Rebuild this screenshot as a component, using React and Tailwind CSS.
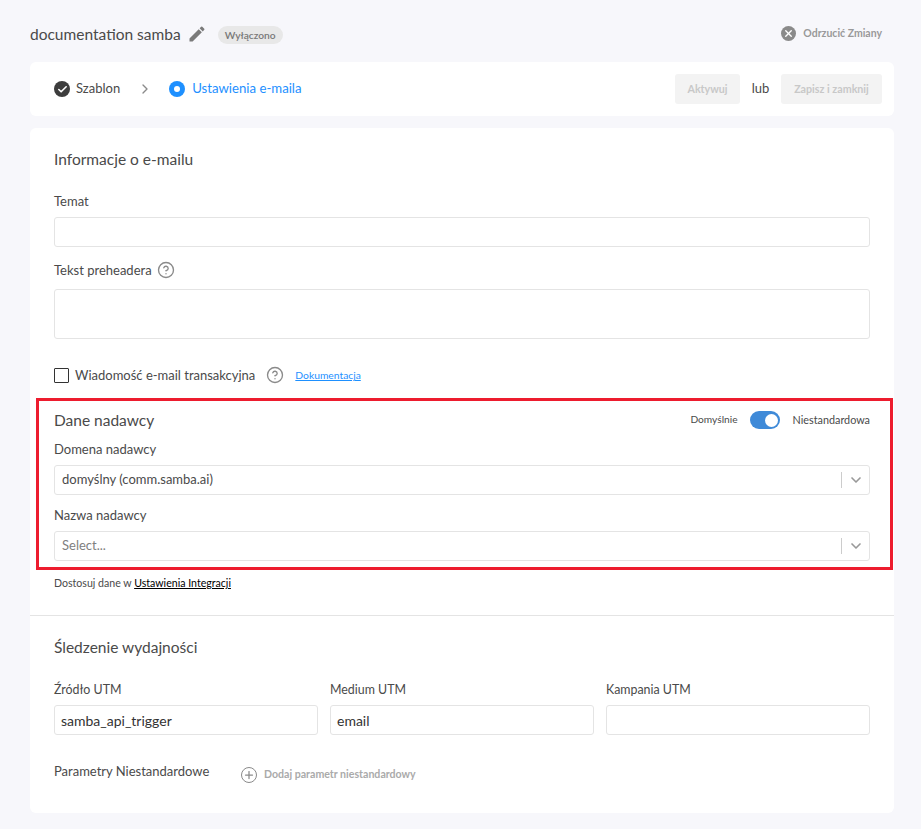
import { Check, ChevronDown, ChevronRight, CircleHelp, Plus, X } from 'lucide-react'

const FONT = "font-['Lato','Noto_Sans',sans-serif]"

const Label = ({ children, className = '' }) => (
  <div className={`text-[13px] leading-[18px] text-[#4a4a4a] ${className}`}>{children}</div>
)

const Heading = ({ children }) => (
  <div className="text-[15.5px] leading-[20px] text-[#4a4a4a]">{children}</div>
)

const TextInput = ({ value, className = '' }) => (
  <div className={`h-[30px] px-[6px] flex items-center bg-white border border-[#e4e4e4] rounded-[3px] text-[14px] text-[#333] ${className}`}>
    {value}
  </div>
)

const Select = ({ value, placeholder }) => (
  <div className="h-[30px] flex items-center bg-white border border-[#e4e4e4] rounded-[3px] text-[13px]">
    <div className={`flex-1 pl-[7px] ${placeholder ? 'text-[#808080]' : 'text-[#4a4a4a]'}`}>{value || placeholder}</div>
    <div className="w-px h-4 bg-[#cccccc]" />
    <div className="w-[27px] flex justify-center text-[#999]"><ChevronDown size={16} strokeWidth={2.5} /></div>
  </div>
)

const Help = ({ className = '' }) => <CircleHelp size={18} strokeWidth={1.8} className={`text-[#8a8a8a] ${className}`} />

export default function App() {
  return (
    <div className={`min-h-[829px] bg-[#f7f7fb] px-[30px] pb-4 pt-[15px] w-[921px] pr-[27px] ${FONT}`}>
      {/* naglowek */}
      <div className="h-[47px] flex items-start pt-[3px]">
        <div className="text-[15.5px] leading-[32px] text-[#4a4a4a]">documentation samba</div>
        <svg viewBox="0 0 24 24" className="ml-[6px] mt-[6px] w-5 h-5 fill-[#7a7a7a]">
          <path d="M3 17.25V21h3.75L17.81 9.94l-3.75-3.75L3 17.25zM20.71 7.04a1 1 0 000-1.41l-2.34-2.34a1 1 0 00-1.41 0l-1.83 1.83 3.75 3.75 1.83-1.83z" />
        </svg>
        <div className="ml-[11px] mt-[8px] h-[18px] w-[65px] text-center rounded-full bg-[#e8e8e8] text-[10.2px] leading-[18px] font-semibold text-[#777]">Wyłączono</div>
        <div className="ml-auto mr-[12px] mt-[8px] flex items-center gap-[7px]">
          <div className="w-[15px] h-[15px] rounded-full bg-[#8a8a8a] flex items-center justify-center text-white"><X size={11} strokeWidth={3} /></div>
          <span className="text-[10.5px] font-bold text-[#999]">Odrzucić Zmiany</span>
        </div>
      </div>

      {/* kroki */}
      <div className="h-[54px] bg-white rounded-[6px] flex items-center pl-[24px] pr-[12px]">
        <div className="w-4 h-4 rounded-full bg-[#3d3d3d] flex items-center justify-center text-white"><Check size={11} strokeWidth={3.5} /></div>
        <span className="ml-[6px] text-[13px] -mt-px text-[#4a4a4a]">Szablon</span>
        <ChevronRight size={16} strokeWidth={2} className="ml-[17px] text-[#8a8a8a]" />
        <div className="ml-[16px] w-4 h-4 rounded-full bg-[#1e90ff] flex items-center justify-center"><div className="w-[6px] h-[6px] rounded-full bg-white" /></div>
        <span className="ml-[7px] text-[13.2px] -mt-px text-[#1e90ff]">Ustawienia e-maila</span>
        <div className="ml-auto flex items-center">
          <div className="h-[30px] w-[65px] rounded-[3px] bg-[#f3f3f3] text-[10.7px] font-bold text-[#c8c8c8] flex items-center justify-center">Aktywuj</div>
          <span className="w-[41px] text-center text-[13px] -mt-px text-[#4a4a4a]">lub</span>
          <div className="h-[30px] w-[101px] rounded-[3px] bg-[#f3f3f3] text-[10.7px] font-bold text-[#c8c8c8] flex items-center justify-center">Zapisz i zamknij</div>
        </div>
      </div>

      {/* formularz */}
      <div className="mt-[12px] bg-white rounded-[6px] h-[685px]">
        <div className="px-[24px] pt-[21px]">
          <Heading>Informacje o e-mailu</Heading>
          <Label className="mt-[23px]">Temat</Label>
          <TextInput className="mt-[7px]" />
          <div className="mt-[14px] flex items-center gap-[5px]">
            <Label>Tekst preheadera</Label>
            <Help />
          </div>
          <div className="mt-[10px] h-[50px] bg-white border border-[#e4e4e4] rounded-[3px]" />
          <div className="mt-[27px] flex items-center h-[18px]">
            <div className="w-[15px] h-[15px] border border-[#333] rounded-[1px]" />
            <Label className="ml-[6px]">Wiadomość e-mail transakcyjna</Label>
            <Help className="ml-[11px]" />
            <a className="ml-[11px] mt-[2px] text-[10.3px] text-[#1e90ff] underline">Dokumentacja</a>
          </div>

          <div className="mt-[14px] -ml-[18px] -mr-[23px] border-[3px] border-[#ed1c2e] pl-[15px] pr-[20px] pt-[9px] h-[172px]">
            <div className="flex items-center h-[20px]">
              <Heading>Dane nadawcy</Heading>
              <div className="ml-auto flex items-center text-[#4a4a4a]">
                <span className="text-[10.2px]">Domyślnie</span>
                <div className="ml-[12px] mr-[13px] w-[30px] h-[18px] rounded-full bg-[#3f8ad8] flex justify-end items-center pr-[2px]"><div className="w-[13px] h-[13px] rounded-full bg-white" /></div>
                <span className="text-[10.8px]">Niestandardowa</span>
              </div>
            </div>
            <Label className="mt-[10px]">Domena nadawcy</Label>
            <div className="mt-[7px]"><Select value="domyślny (comm.samba.ai)" /></div>
            <Label className="mt-[11px]">Nazwa nadawcy</Label>
            <div className="mt-[7px]"><Select placeholder="Select..." /></div>
          </div>

          <div className="mt-[6px] text-[10.6px] leading-[14px] text-[#4a4a4a]">
            Dostosuj dane w <a className="text-black underline">Ustawienia Integracji</a>
          </div>
        </div>

        <div className="mt-[25px] border-t border-[#e4e4e4] px-[24px] pt-[21px]">
          <Heading>Śledzenie wydajności</Heading>
          <div className="mt-[24px] grid grid-cols-3 gap-x-[12px]">
            {[['Źródło UTM', 'samba_api_trigger'], ['Medium UTM', 'email'], ['Kampania UTM', '']].map(([l, v]) => (
              <div key={l}>
                <div className="text-[12.4px] leading-[18px] text-[#4a4a4a]">{l}</div>
                <TextInput className="mt-[6px]" value={v} />
              </div>
            ))}
          </div>
          <div className="mt-[32px] flex items-center">
            <Label className="w-[187px] -mt-[8px]">Parametry Niestandardowe</Label>
            <div className="w-4 h-4 rounded-full border-[1.5px] border-[#8a8a8a] flex items-center justify-center text-[#8a8a8a]"><Plus size={12} strokeWidth={2.5} /></div>
            <span className="ml-[7px] text-[10.6px] font-bold text-[#aaa]">Dodaj parametr niestandardowy</span>
          </div>
        </div>
      </div>
    </div>
  )
}
